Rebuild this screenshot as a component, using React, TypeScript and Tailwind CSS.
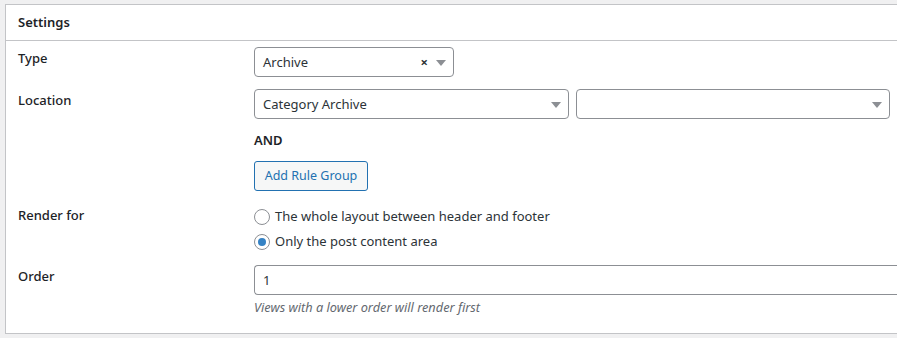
import React from "react";

function Caret() {
  return (
    <svg width="10" height="6" viewBox="0 0 10 6" className="shrink-0">
      <path d="M0 0h10L5 6z" fill="#8c8f94" />
    </svg>
  );
}

function Select({ value, width, clear }: { value?: string; width: string; clear?: boolean }) {
  return (
    <div className={`flex h-[30px] items-center rounded-[4px] border border-[#8c8f94] bg-white pl-[8px] pr-[7px] pt-[1px] ${width}`}>
      <span className="flex-1 text-[13px] text-[#2c3338]">{value}</span>
      {clear && <span className="mr-[8px] text-[13px] font-bold leading-none text-[#2c3338]">×</span>}
      <Caret />
    </div>
  );
}

function Radio({ checked, label }: { checked?: boolean; label: string }) {
  return (
    <label className="flex h-[25px] items-center gap-[5px] text-[13px] text-[#2c3338]">
      <span className="flex h-[16px] w-[16px] items-center justify-center rounded-full border border-[#8c8f94] bg-white">
        {checked && <span className="h-[8px] w-[8px] rounded-full bg-[#3582c4]" />}
      </span>
      {label}
    </label>
  );
}

export default function App() {
  return (
    <div className="h-[338px] overflow-hidden bg-[#f0f0f1] pl-[5px] pt-[4px] font-['Segoe_UI','Noto_Sans',sans-serif] text-[#1d2327]">
      <div className="h-[330px] border border-r-0 border-[#c3c4c7] bg-white">
        <div className="flex h-[36px] items-center border-b border-[#c3c4c7] pl-[12px] text-[13px] font-semibold">
          Settings
        </div>

        <div className="flex pt-[6px]">
          <div className="w-[248px] pl-[12px] pt-[1px] text-[13px] leading-[20px] font-medium">Type</div>
          <Select value="Archive" width="w-[200px]" clear />
        </div>

        <div className="flex pt-[12px]">
          <div className="w-[248px] pl-[12px] pt-[1px] text-[13px] leading-[20px] font-medium">Location</div>
          <div className="flex flex-col">
            <div className="flex gap-[7px]">
              <Select value="Category Archive" width="w-[315px]" />
              <Select width="w-[314px]" />
            </div>
            <div className="mt-[11px] text-[13px] leading-[20px] font-semibold">AND</div>
            <button className="mt-[11px] h-[30px] w-[114px] rounded-[3px] border border-[#2271b1] bg-[#f6f7f7] text-[12.5px] text-[#2271b1]">
              Add Rule Group
            </button>
          </div>
        </div>

        <div className="flex pt-[13px]">
          <div className="w-[248px] pl-[12px] pt-[1px] text-[13px] leading-[20px] font-medium">Render for</div>
          <div className="flex flex-col">
            <Radio label="The whole layout between header and footer" />
            <Radio checked label="Only the post content area" />
          </div>
        </div>

        <div className="flex pt-[11px]">
          <div className="w-[248px] pl-[12px] pt-[1px] text-[13px] leading-[20px] font-medium">Order</div>
          <div className="flex flex-1 flex-col">
            <div className="flex h-[30px] items-center rounded-l-[4px] border border-r-0 border-[#8c8f94] pl-[8px] pt-[1px] text-[13px] text-[#2c3338]">
              1
            </div>
            <div className="mt-[2px] text-[12.75px] italic leading-[20px] text-[#646970]">
              Views with a lower order will render first
            </div>
          </div>
        </div>
      </div>
    </div>
  );
}
